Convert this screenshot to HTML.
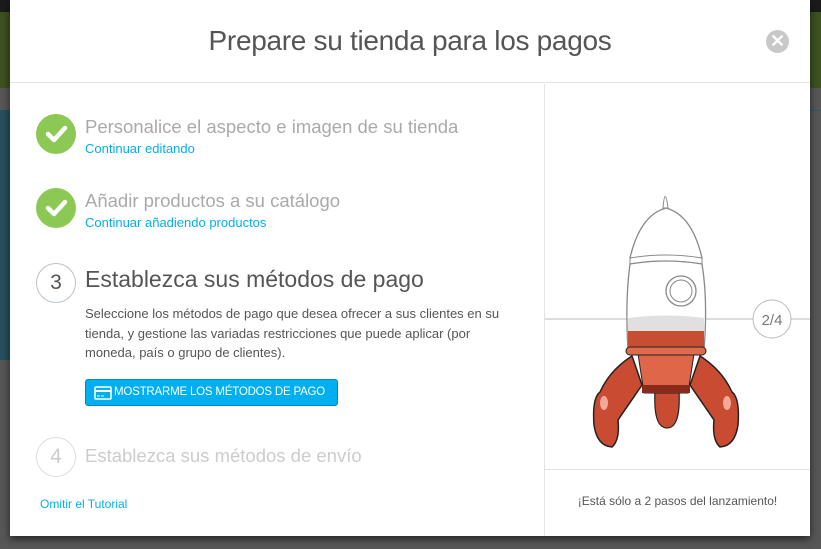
<!DOCTYPE html>
<html><head><meta charset="utf-8"><style>
*{margin:0;padding:0;box-sizing:border-box}
body{width:821px;height:549px;overflow:hidden;position:relative;background:#575757;font-family:"Liberation Sans",sans-serif}
.bg{position:absolute}
.modal{position:absolute;left:10px;top:0;width:800px;height:536px;background:#fff;box-shadow:0 3px 8px rgba(0,0,0,.6)}
.title{position:absolute;left:0;top:0;width:800px;height:83px;border-bottom:1px solid #e3e3e3;text-align:center;line-height:82px;font-size:28px;color:#555;font-weight:300;letter-spacing:-.3px}
.close{position:absolute;left:756px;top:30px;width:23px;height:23px;border-radius:50%;background:#c8c8c8;color:#fff;font-size:18px;font-weight:bold;line-height:23px;text-align:center}
.vdiv{position:absolute;left:534px;top:84px;width:1px;height:452px;background:#e3e3e3}
.hdiv{position:absolute;left:535px;top:469px;width:265px;height:1px;background:#e3e3e3}
.check{position:absolute;width:40px;height:40px;border-radius:50%;background:#8bc954}
.num{position:absolute;width:40px;height:40px;border-radius:50%;border:1px solid #b9c3c8;text-align:center;line-height:38px;font-size:21px;color:#555}
.h{position:absolute;font-size:18.5px;color:#aaa;white-space:nowrap}
.l{position:absolute;font-size:13px;color:#00aff0;white-space:nowrap}
.p{position:absolute;left:75px;top:304px;width:425px;font-size:13px;line-height:19.5px;color:#555}
.btn{position:absolute;left:75px;top:379px;width:253px;height:27px;background:#00aff0;border:1px solid #008abd;border-radius:3px;color:#fff;font-size:11.5px;letter-spacing:-.2px;line-height:25px;padding-left:28px;white-space:nowrap;overflow:hidden}
</style></head><body>
<div class="bg" style="left:0;top:0;width:821px;height:12px;background:#1b1b1b"></div>
<div class="bg" style="left:0;top:12px;width:821px;height:76px;background:#3e5121"></div>
<div class="bg" style="left:0;top:110px;width:10px;height:250px;background:#27505e"></div>
<div class="bg" style="left:810px;top:110px;width:11px;height:1px;background:#2a5d70"></div>
<div class="modal">
<div class="title">Prepare su tienda para los pagos</div>
<div class="close">✕</div>
<div class="vdiv"></div><div class="hdiv"></div>
<div class="check" style="left:26px;top:114px"><svg width="40" height="40"><path d="M12 20l6 6 11-12" stroke="#fff" stroke-width="4.5" fill="none" stroke-linecap="round" stroke-linejoin="round"/></svg></div>
<div class="h" style="left:75px;top:116px">Personalice el aspecto e imagen de su tienda</div>
<div class="l" style="left:75px;top:141px">Continuar editando</div>
<div class="check" style="left:26px;top:188px"><svg width="40" height="40"><path d="M12 20l6 6 11-12" stroke="#fff" stroke-width="4.5" fill="none" stroke-linecap="round" stroke-linejoin="round"/></svg></div>
<div class="h" style="left:75px;top:190px">Añadir productos a su catálogo</div>
<div class="l" style="left:75px;top:215px">Continuar añadiendo productos</div>
<div class="num" style="left:26px;top:263px">3</div>
<div class="h" style="left:75px;top:266px;font-size:23px;color:#555">Establezca sus métodos de pago</div>
<div class="p">Seleccione los métodos de pago que desea ofrecer a sus clientes en su tienda, y gestione las variadas restricciones que puede aplicar (por moneda, país o grupo de clientes).</div>
<div class="btn"><svg style="position:absolute;left:8px;top:6px" width="18" height="14"><rect x="1" y="1" width="16" height="12" rx="1" fill="none" stroke="#fff" stroke-width="1.6"/><rect x="1" y="4" width="16" height="2" fill="#fff"/><path d="M3 10h3M7 10h3" stroke="#fff"/></svg>MOSTRARME LOS MÉTODOS DE PAGO</div>
<div class="num" style="left:26px;top:437px;color:#ccc;border-color:#ddd">4</div>
<div class="h" style="left:75px;top:445px;color:#ccc">Establezca sus métodos de envío</div>
<div class="l" style="left:30px;top:497px;font-size:12px">Omitir el Tutorial</div>
<div style="position:absolute;left:535px;top:494px;width:265px;text-align:center;font-size:12px;color:#555">¡Está sólo a 2 pasos del lanzamiento!</div>
</div>
<svg style="position:absolute;left:0;top:0" width="821" height="549">
<line x1="545" y1="319" x2="753" y2="319" stroke="#bbb"/>
<line x1="791" y1="319" x2="810" y2="319" stroke="#bbb"/>
<circle cx="772" cy="319" r="19" fill="#fff" stroke="#bbb"/>
<text x="772" y="325" font-size="15" fill="#777" text-anchor="middle" font-family="Liberation Sans">2/4</text>
<path d="M663 208 Q665 185 668 208 Z" fill="#fff" stroke="#888"/>
<path d="M630 258 Q640 215 666 208 Q692 215 702 258 Z" fill="#fff" stroke="#888" stroke-width="1.3"/>
<path d="M630 258 Q666 252 702 258 L702 264 Q666 258 630 264 Z" fill="#fff" stroke="#888"/>
<path d="M630 264 Q666 258 702 264 Q708 300 704 350 L628 350 Q625 300 630 264 Z" fill="#fff" stroke="#888" stroke-width="1.3"/>
<circle cx="681" cy="291" r="15" fill="#fff" stroke="#888" stroke-width="1.3"/>
<circle cx="681" cy="291" r="11" fill="#fff" stroke="#888"/>
<path d="M628 318 Q666 313 704 318 L704 331 L628 331 Z" fill="#e0e0e0"/>
<path d="M628 331 L704 331 L704 350 L628 350 Z" fill="#c84e33"/>
<path d="M632 356 Q610 370 600 392 Q592 398 594 425 Q597 446 612 447 Q620 440 618 420 L642 385 Z" fill="#c94c32" stroke="#222" stroke-width="1.5"/>
<path d="M700 356 Q722 370 732 392 Q740 398 738 425 Q735 446 720 447 Q712 440 714 420 L690 385 Z" fill="#c94c32" stroke="#222" stroke-width="1.5"/>
<path d="M655 390 Q653 428 667 428 Q681 428 679 390 Z" fill="#c94c32" stroke="#222" stroke-width="1.2"/>
<path d="M638 354 L694 354 L688 393 L644 393 Z" fill="#e0664a" stroke="#222" stroke-width="1"/>
<rect x="642" y="385" width="48" height="8" fill="#8a2a1a"/>
<rect x="626" y="347" width="80" height="8" rx="4" fill="#e06a4c" stroke="#222" stroke-width="1"/>
<ellipse cx="604" cy="403" rx="4" ry="7" fill="#f3a898"/>
<ellipse cx="727" cy="403" rx="4" ry="7" fill="#f3a898"/>
</svg>
</body></html>
